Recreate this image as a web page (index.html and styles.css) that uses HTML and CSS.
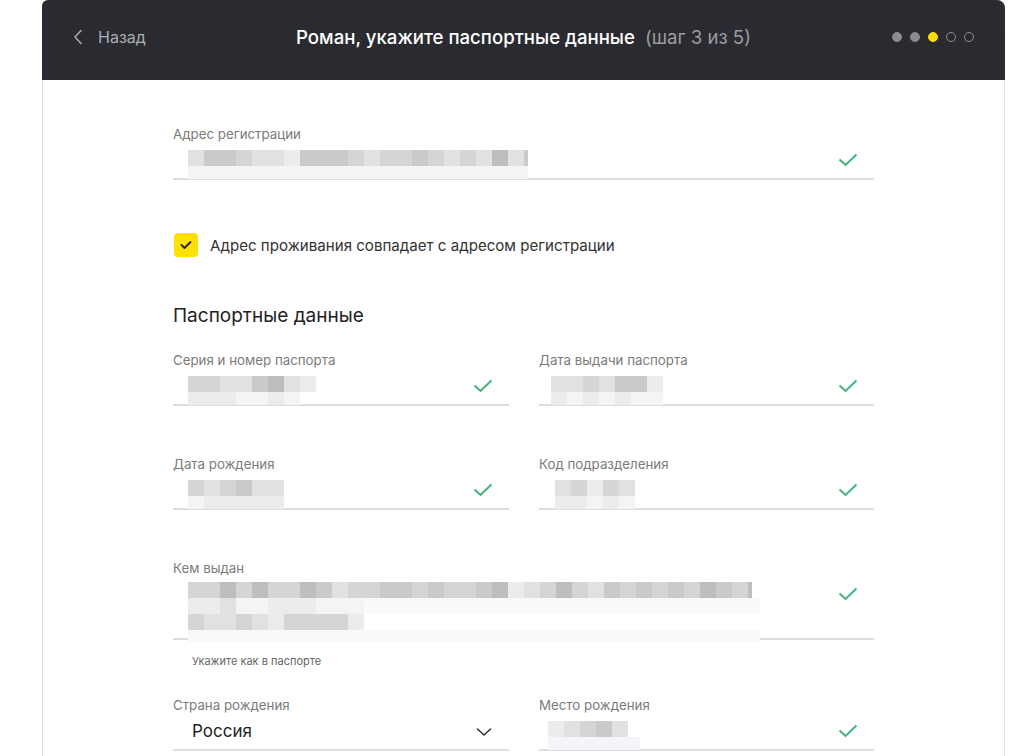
FILE: index.html
```html
<!DOCTYPE html>
<html lang="ru">
<head>
<meta charset="utf-8">
<title>Паспортные данные</title>
<link rel="stylesheet" href="styles.css">
</head>
<body>
<div class="card">
  <header class="head">
    <a class="back">
      <svg width="10" height="16" viewBox="0 0 10 16"><path d="M8 1.5 L2 8 L8 14.5" fill="none" stroke="#a9a9ae" stroke-width="1.6" stroke-linecap="round" stroke-linejoin="round"/></svg>
      <span>Назад</span>
    </a>
    <h1 class="title">Роман, укажите паспортные данные <span class="step">(шаг 3 из 5)</span></h1>
    <div class="dots">
      <span class="dot done"></span><span class="dot done"></span><span class="dot cur"></span><span class="dot"></span><span class="dot"></span>
    </div>
  </header>

  <main class="content">
    <div class="field">
      <div class="label">Адрес регистрации</div>
      <div class="value">
        <div class="blur">
          <div class="row"><i class="s2"></i><i class="s4"></i><i class="s4"></i><i class="s3"></i><i class="s2"></i><i class="s2"></i><i class="s1"></i><i class="s4"></i><i class="s4"></i><i class="s4"></i><i class="s3"></i><i class="s2"></i><i class="s3"></i><i class="s3"></i><i class="s4"></i><i class="s3"></i><i class="s2"></i><i class="s3"></i><i class="s2"></i><i class="s5"></i><i class="s2"></i><i class="s4 half"></i></div>
          <div class="row low"><i class="s0 w340"></i></div>
        </div>
      </div>
      <svg class="ok" width="20" height="14" viewBox="0 0 20 14"><path d="M1.5 6.5 L7.5 12 L18.5 1.5" fill="none" stroke="#3cb67c" stroke-width="2"/></svg>
    </div>

    <label class="agree">
      <span class="box"><svg width="12" height="10" viewBox="0 0 12 10"><path d="M1.5 5 L4.5 8 L10.5 2" fill="none" stroke="#222" stroke-width="1.8" stroke-linecap="round" stroke-linejoin="round"/></svg></span>
      <span>Адрес проживания совпадает с адресом регистрации</span>
    </label>

    <h2 class="section">Паспортные данные</h2>

    <div class="grid">
      <div class="field">
        <div class="label">Серия и номер паспорта</div>
        <div class="value">
          <div class="blur">
            <div class="row"><i class="s3"></i><i class="s3"></i><i class="s2"></i><i class="s2"></i><i class="s4"></i><i class="s5"></i><i class="s2"></i><i class="s1"></i></div>
            <div class="row low"><i class="s1"></i><i class="s1"></i><i class="s1"></i><i class="s0"></i><i class="s0"></i><i class="s1"></i><i class="s0"></i></div>
          </div>
        </div>
        <svg class="ok" width="20" height="14" viewBox="0 0 20 14"><path d="M1.5 6.5 L7.5 12 L18.5 1.5" fill="none" stroke="#3cb67c" stroke-width="2"/></svg>
      </div>
      <div class="field">
        <div class="label">Дата выдачи паспорта</div>
        <div class="value ind12">
          <div class="blur">
            <div class="row"><i class="s2"></i><i class="s2"></i><i class="s3"></i><i class="s2"></i><i class="s4"></i><i class="s4"></i><i class="s1"></i></div>
            <div class="row low"><i class="s1"></i><i class="s0"></i><i class="s1"></i><i class="s0"></i><i class="s1"></i><i class="s0"></i><i class="s0"></i></div>
          </div>
        </div>
        <svg class="ok" width="20" height="14" viewBox="0 0 20 14"><path d="M1.5 6.5 L7.5 12 L18.5 1.5" fill="none" stroke="#3cb67c" stroke-width="2"/></svg>
      </div>

      <div class="field">
        <div class="label">Дата рождения</div>
        <div class="value">
          <div class="blur">
            <div class="row"><i class="s3"></i><i class="s2"></i><i class="s3"></i><i class="s4"></i><i class="s2"></i><i class="s2"></i></div>
            <div class="row low"><i class="s0"></i><i class="s1"></i><i class="s1"></i><i class="s1"></i><i class="s1"></i><i class="s1"></i></div>
          </div>
        </div>
        <svg class="ok" width="20" height="14" viewBox="0 0 20 14"><path d="M1.5 6.5 L7.5 12 L18.5 1.5" fill="none" stroke="#3cb67c" stroke-width="2"/></svg>
      </div>
      <div class="field">
        <div class="label">Код подразделения</div>
        <div class="value ind16">
          <div class="blur">
            <div class="row"><i class="s2"></i><i class="s3"></i><i class="s1"></i><i class="s3"></i><i class="s2"></i></div>
            <div class="row low"><i class="s1"></i><i class="s1"></i><i class="s0"></i><i class="s1"></i><i class="s0"></i></div>
          </div>
        </div>
        <svg class="ok" width="20" height="14" viewBox="0 0 20 14"><path d="M1.5 6.5 L7.5 12 L18.5 1.5" fill="none" stroke="#3cb67c" stroke-width="2"/></svg>
      </div>
    </div>

    <div class="field issued">
      <div class="label">Кем выдан</div>
      <div class="value tall">
        <div class="blur">
          <div class="row"><i class="s3"></i><i class="s3"></i><i class="s5"></i><i class="s3"></i><i class="s5"></i><i class="s3"></i><i class="s3"></i><i class="s5"></i><i class="s4"></i><i class="s2"></i><i class="s3"></i><i class="s3"></i><i class="s4"></i><i class="s4"></i><i class="s3"></i><i class="s4"></i><i class="s3"></i><i class="s3"></i><i class="s4"></i><i class="s5"></i><i class="s1"></i><i class="s2"></i><i class="s3"></i><i class="s5"></i><i class="s3"></i><i class="s2"></i><i class="s4"></i><i class="s3"></i><i class="s4"></i><i class="s3"></i><i class="s4"></i><i class="s3"></i><i class="s5"></i><i class="s4"></i><i class="s3"></i><i class="s5 half"></i></div>
          <div class="row"><i class="s1"></i><i class="s1"></i><i class="s2"></i><i class="s0"></i><i class="s0"></i><i class="s1"></i><i class="s1"></i><i class="s1"></i><i class="s0"></i><i class="s0"></i><i class="s0"></i><i class="w396 s00"></i></div>
          <div class="row"><i class="s3"></i><i class="s2"></i><i class="s2"></i><i class="s3"></i><i class="s2"></i><i class="s1"></i><i class="s3"></i><i class="s3"></i><i class="s3"></i><i class="s3"></i><i class="s1"></i></div>
          <div class="row low2"><i class="s00 w572"></i></div>
        </div>
      </div>
      <svg class="ok" width="20" height="14" viewBox="0 0 20 14"><path d="M1.5 6.5 L7.5 12 L18.5 1.5" fill="none" stroke="#3cb67c" stroke-width="2"/></svg>
    </div>
    <div class="hint">Укажите как в паспорте</div>

    <div class="grid last">
      <div class="field">
        <div class="label">Страна рождения</div>
        <div class="value ind19">
          <span class="country">Россия</span>
        </div>
        <svg class="chev" width="16" height="10" viewBox="0 0 16 10"><path d="M1.5 2 L8 8 L14.5 2" fill="none" stroke="#333" stroke-width="1.6" stroke-linecap="round" stroke-linejoin="round"/></svg>
      </div>
      <div class="field">
        <div class="label">Место рождения</div>
        <div class="value ind9">
          <div class="blur">
            <div class="row"><i class="s1"></i><i class="s2"></i><i class="s3"></i><i class="s4"></i><i class="s2"></i></div>
            <div class="row low"><i class="sb w92"></i></div>
          </div>
        </div>
        <svg class="ok" width="20" height="14" viewBox="0 0 20 14"><path d="M1.5 6.5 L7.5 12 L18.5 1.5" fill="none" stroke="#3cb67c" stroke-width="2"/></svg>
      </div>
    </div>
  </main>
</div>
</body>
</html>
```

FILE: styles.css
```css
* { box-sizing: border-box; }
html, body { margin: 0; padding: 0; background: #fff; }
body {
  font-family: Inter, "Noto Sans", "DejaVu Sans", sans-serif;
  color: #222;
  overflow: hidden;
}
.card {
  margin-left: 42px;
  width: 963px;
  min-height: 756px;
  border-left: 1px solid #dcdcdc;
  border-right: 1px solid #e4e4e4;
  border-radius: 6px 8px 0 0;
}
.head {
  height: 80px;
  margin: 0 -1px;
  background-color: #2a2b30;
  background-image: radial-gradient(rgba(90,90,130,0.35) 0.6px, transparent 0.9px);
  background-size: 9px 9px;
  border-radius: 6px 8px 0 0;
  display: grid;
  grid-template-columns: 1fr auto 1fr;
  align-items: center;
  padding: 0 31px 6px 31px;
}
.back {
  display: flex;
  align-items: center;
  gap: 15px;
  color: #adadb2;
  font-size: 16px;
  justify-self: start;
}
.title {
  margin: 0;
  font-size: 18.6px;
  font-weight: 500;
  color: #fff;
  white-space: nowrap;
}
.step {
  font-weight: 400;
  color: #9c9ca2;
  margin-left: 5px;
}
.dots {
  justify-self: end;
  display: flex;
  gap: 8px;
}
.dot {
  width: 10px;
  height: 10px;
  border-radius: 50%;
  border: 1.5px solid #8b8b90;
}
.dot.done { background: #8b8b90; }
.dot.cur { background: #ffdd00; border-color: #ffdd00; }

.content {
  width: 701px;
  margin: 0 auto;
  padding-top: 46px;
}
.field {
  position: relative;
  border-bottom: 2px solid #dedede;
}
.label {
  font-size: 13.3px;
  line-height: 16px;
  color: #7b7b7b;
}
.value {
  height: 36px;
  padding-left: 15px;
  display: flex;
  align-items: flex-end;
}
.value.tall { height: 62px; align-items: flex-start; padding-top: 6px; }
.ind12 { padding-left: 12px; }
.ind16 { padding-left: 16px; }
.ind9 { padding-left: 9px; }
.ind19 { padding-left: 19px; align-items: center; }
.ok {
  position: absolute;
  right: 16px;
  top: 27px;
}
.chev {
  position: absolute;
  right: 17px;
  top: 30px;
}
.blur { display: flex; flex-direction: column; margin-bottom: -1px; }
.row { display: flex; height: 16px; }
.row.low { height: 13px; }
.row.low2 { height: 12px; }
.row i { display: block; width: 16px; height: 100%; }
.row i.half { width: 4px; }
.w340 { width: 340px !important; }
.w396 { width: 396px !important; }
.w572 { width: 572px !important; }
.w92 { width: 92px !important; }
.s00 { background: #f9f9f9; }
.s0 { background: #f4f4f4; }
.s1 { background: #ececec; }
.s2 { background: #e1e1e1; }
.s3 { background: #d5d5d5; }
.s4 { background: #cacaca; }
.s5 { background: #bebebe; }
.sb { background: #f3f5f9; }

.agree {
  margin-top: 53px;
  display: flex;
  align-items: center;
  gap: 12px;
  font-size: 15.1px;
  color: #333;
  height: 24px;
}
.box {
  width: 24px;
  height: 24px;
  margin-left: 1px;
  border-radius: 4px;
  background: #ffe100;
  display: flex;
  align-items: center;
  justify-content: center;
}
.section {
  margin: 47px 0 24px;
  font-size: 19px;
  line-height: 24px;
  font-weight: 400;
  color: #222;
}
.grid {
  display: grid;
  grid-template-columns: 336px 335px;
  column-gap: 30px;
  row-gap: 50px;
}
.issued { margin-top: 50px; }
.hint {
  margin-top: 14px;
  padding-left: 19px;
  font-size: 11px;
  line-height: 14px;
  color: #666;
}
.grid.last { margin-top: 29px; }
.country {
  font-size: 17px;
  color: #1f1f1f;
  margin-top: -1px;
}
```
